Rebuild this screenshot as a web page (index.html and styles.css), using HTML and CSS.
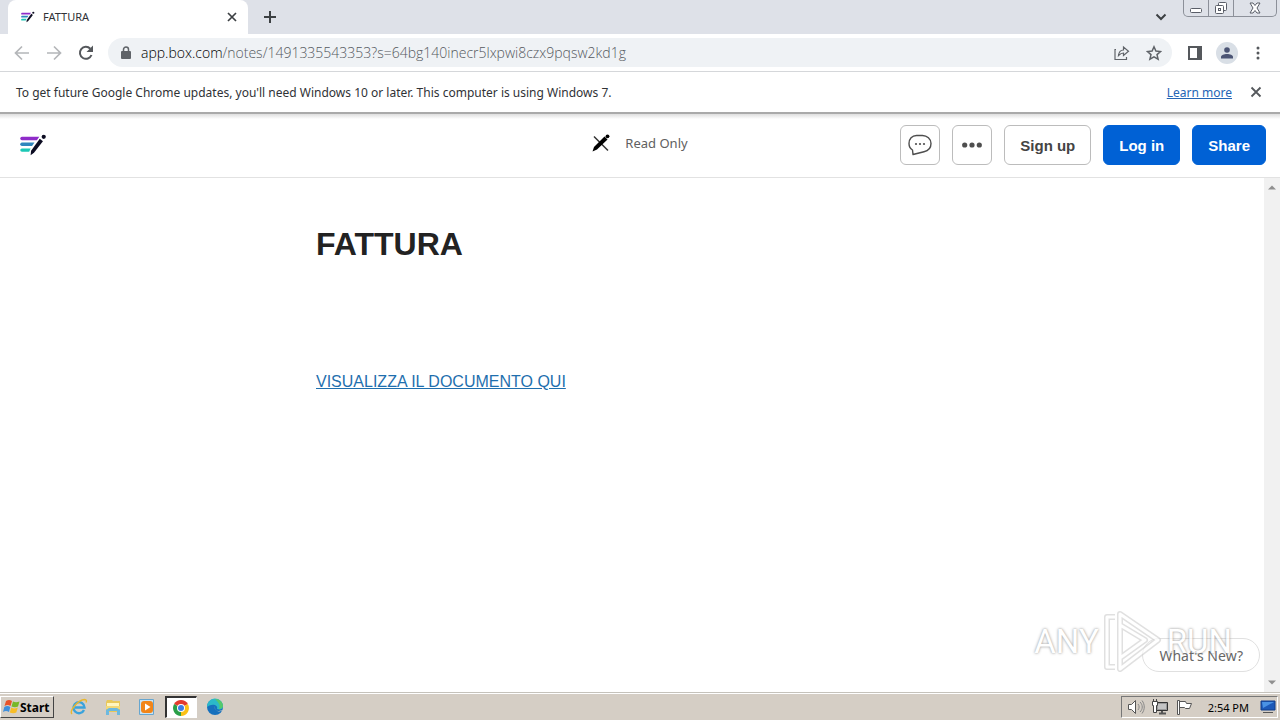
FILE: index.html
```html
<!DOCTYPE html>
<html lang="en">
<head>
<meta charset="utf-8">
<meta name="viewport" content="width=device-width, initial-scale=1">
<title>FATTURA</title>
<link rel="stylesheet" href="styles.css">
</head>
<body>
<svg class="defs" width="0" height="0" aria-hidden="true">
  <symbol id="notes" viewBox="0 0 28 24">
    <path d="M2 3.500h18l-2.500 3.500H2a1.750 1.750 0 0 1 0-3.500z" fill="#8f2cc9"/>
    <path d="M2 9.500h13l-2.500 3.500H2a1.750 1.750 0 0 1 0-3.500z" fill="#2f86bd"/>
    <path d="M2 15.500h9L9.500 19H2a1.750 1.750 0 0 1 0-3.500z" fill="#1cc8b5"/>
    <path d="M20.500 5.500l3.300 2.500L14.500 20 11 22.500l.5-4.500z" fill="#0c0c22"/>
    <circle cx="24.600" cy="3.500" r="2.200" fill="#0c0c22"/>
  </symbol>
</svg>

<header class="tabstrip">
  <div class="tab">
    <svg class="favicon" viewBox="0 0 28 24"><use href="#notes"/></svg>
    <span class="tab-title">FATTURA</span>
    <button class="plain" aria-label="Close tab"><svg width="10" height="10" viewBox="0 0 10 10"><path d="M1 1l8 8M9 1L1 9" stroke="#3c4043" stroke-width="1.700"/></svg></button>
  </div>
  <button class="plain newtab" aria-label="New tab"><svg width="12" height="12" viewBox="0 0 12 12"><path d="M6 0v12M0 6h12" stroke="#3c4043" stroke-width="2"/></svg></button>
  <button class="plain tabsearch" aria-label="Search tabs"><svg width="12" height="8" viewBox="0 0 12 8"><path d="M1.500 1.500L6 6l4.500-4.500" fill="none" stroke="#3c4043" stroke-width="2"/></svg></button>
  <div class="window-controls">
    <button class="wc" aria-label="Minimize"><svg width="12" height="14" viewBox="0 0 12 14"><rect x=".5" y="7.500" width="11" height="4" rx="1" fill="#fff" stroke="#5a5e68"/></svg></button>
    <button class="wc" aria-label="Restore"><svg width="14" height="14" viewBox="0 0 14 14"><g fill="#fff" stroke="#5a5e68"><rect x="4.500" y="1.500" width="8" height="8" rx="1"/><rect x="1.500" y="4.500" width="8" height="8" rx="1"/><rect x="4.500" y="7.500" width="2" height="2"/></g></svg></button>
    <button class="wc wc-close" aria-label="Close"><svg width="12" height="12" viewBox="0 0 12 12"><path d="M1 1h3l2 2.500L8 1h3L8 6l3 5H8L6 8.500 4 11H1l3-5z" fill="#fff" stroke="#5a5e68"/></svg></button>
  </div>
</header>

<nav class="toolbar" aria-label="Browser">
  <button class="plain nav" aria-label="Back"><svg width="16" height="16" viewBox="0 0 16 16"><path d="M15 8H2M8 1.500L1.500 8 8 14.500" fill="none" stroke="#b4b6b9" stroke-width="1.700"/></svg></button>
  <button class="plain nav" aria-label="Forward"><svg width="16" height="16" viewBox="0 0 16 16"><path d="M1 8h13M8 1.500L14.500 8 8 14.500" fill="none" stroke="#b4b6b9" stroke-width="1.700"/></svg></button>
  <button class="plain nav" aria-label="Reload"><svg width="16" height="16" viewBox="0 0 16 16"><path d="M13.500 10A6 6 0 1 1 12.300 3.700" fill="none" stroke="#55585c" stroke-width="2"/><path d="M15 .5V7H8.500z" fill="#55585c"/></svg></button>
  <div class="omnibox">
    <svg width="10" height="14" viewBox="0 0 10 14"><rect x="0" y="5" width="10" height="8" rx="1" fill="#5f6368"/><path d="M2.500 5.500V3.500a2.500 2.500 0 0 1 5 0v2" fill="none" stroke="#5f6368" stroke-width="1.500"/></svg>
    <a class="url" href="#"><span class="host">app.box.com</span>/notes/1491335543353?s=64bg140inecr5lxpwi8czx9pqsw2kd1g</a>
    <button class="plain" aria-label="Share this page"><svg width="16" height="16" viewBox="0 0 16 16"><path d="M2 4.500H1v10h11.500V12M4.500 10.500c.4-3.500 2-5.500 5-5.500V2l5 4.200-5 4.300V8C7.500 8 6 9 4.500 10.500z" fill="none" stroke="#5f6368" stroke-width="1.200"/></svg></button>
    <button class="plain star" aria-label="Bookmark"><svg width="16" height="16" viewBox="0 0 16 16"><path d="M8 1.800l1.900 4.300 4.600.4-3.500 3.100 1.100 4.600L8 11.800l-4.100 2.400L5 9.600 1.500 6.500l4.600-.4z" fill="none" stroke="#5f6368" stroke-width="1.500"/></svg></button>
  </div>
  <button class="plain" aria-label="Side panel"><svg width="14" height="14" viewBox="0 0 14 14"><path d="M1 1h12v12H1z" fill="none" stroke="#55585c" stroke-width="2"/><path d="M9 1h4v12H9z" fill="#55585c"/></svg></button>
  <button class="plain avatar" aria-label="Profile"><svg width="12" height="12" viewBox="0 0 12 12" fill="#4b5474"><circle cx="6" cy="3" r="2.800"/><path d="M0 11.500V10c0-2 3-3 6-3s6 1 6 3v1.500z"/></svg></button>
  <button class="plain kebab" aria-label="Menu"><svg width="4" height="14" viewBox="0 0 4 14" fill="#55585c"><circle cx="2" cy="2" r="1.500"/><circle cx="2" cy="7" r="1.500"/><circle cx="2" cy="12" r="1.500"/></svg></button>
</nav>

<aside class="infobar">
  <span class="info-text">To get future Google Chrome updates, you'll need Windows 10 or later. This computer is using Windows 7.</span>
  <a class="learn" href="#">Learn more</a>
  <button class="plain" aria-label="Dismiss"><svg width="12" height="12" viewBox="0 0 12 12"><path d="M1.500 1.500l9 9M10.500 1.500l-9 9" stroke="#55585c" stroke-width="1.800"/></svg></button>
</aside>

<div class="appbar">
  <svg class="logo" viewBox="0 0 28 24"><use href="#notes"/></svg>
  <div class="mode">
    <svg width="18" height="18" viewBox="0 0 18 18"><path d="M2 2.500L16 16.500" stroke="#333" stroke-width="1.500"/><path d="M12.500 2.500l3 3L5 15.500.5 17.500 2 13z" fill="#000"/><circle cx="15.500" cy="2.300" r="1.900" fill="#000"/></svg>
    <span>Read Only</span>
  </div>
  <div class="actions">
    <button class="btn icon-btn" aria-label="Comments"><svg width="24" height="22" viewBox="0 0 24 22"><path d="M5 20.500L4.500 16C2 14.500 1 12 1 9.500 1 5 4 1.500 8.500 1.500h6C19 1.500 23 5 23 9.500c0 5-3.500 7.500-7 8.200z" fill="none" stroke="#4e4e4e" stroke-width="1.400" stroke-linejoin="round"/><g fill="#4e4e4e"><circle cx="8" cy="10" r="1.100"/><circle cx="12" cy="10" r="1.100"/><circle cx="16" cy="10" r="1.100"/></g></svg></button>
    <button class="btn icon-btn" aria-label="More options"><svg width="20" height="6" viewBox="0 0 20 6" fill="#4e4e4e"><circle cx="2.700" cy="3" r="2.600"/><circle cx="10" cy="3" r="2.600"/><circle cx="17.300" cy="3" r="2.600"/></svg></button>
    <button class="btn">Sign up</button>
    <button class="btn primary">Log in</button>
    <button class="btn primary">Share</button>
  </div>
</div>

<main class="viewport">
  <article class="note">
    <h1>FATTURA</h1>
    <a class="doc-link" href="#">VISUALIZZA IL DOCUMENTO QUI</a>
  </article>
  <div class="scrollbar" aria-hidden="true">
    <svg width="8" height="5" viewBox="0 0 8 5"><path d="M0 4.500L4 .5l4 4z" fill="#8f8f8f"/></svg>
    <svg width="8" height="5" viewBox="0 0 8 5"><path d="M0 .5h8l-4 4z" fill="#8f8f8f"/></svg>
  </div>
  <button class="whats-new">What's New?</button>
  <div class="watermark">
    <span>ANY</span>
    <svg width="60" height="64" viewBox="0 0 60 64" fill="none" stroke-linejoin="round"><g stroke="#d4d4d4" stroke-width="6"><path d="M17 15V4l38 26-38 29V48M17 15v33l25-18z"/><path d="M12 7H4v50h8"/></g><g stroke="#fff" stroke-width="3"><path d="M17 15V4l38 26-38 29V48M17 15v33l25-18z"/><path d="M12 7H4v50h8"/></g></svg>
    <span>RUN</span>
  </div>
</main>

<footer class="taskbar">
  <button class="start"><svg width="17" height="16" viewBox="0 0 17 16"><path d="M3 2c2-1.500 4-1.500 6 0L7.500 7C5.500 5.800 4 5.800 1.500 7z" fill="#e8532a"/><path d="M10 2.500c2 1 4 1 6.500 0L15 7.500c-2 1-4 1-6.500 0z" fill="#77b82a"/><path d="M1.300 8c2-1.200 4-1.200 6 0L6 13c-2-1.200-4-1.200-6 0z" fill="#3f8fdc"/><path d="M8.300 8.500c2 1.200 4 1.200 6.500 0l-1.500 5c-2 1-4 1-6.500 0z" fill="#f8bd26"/></svg>Start</button>
  <div class="tasks">
    <button class="task" aria-label="Internet Explorer"><svg width="18" height="18" viewBox="0 0 18 18"><path d="M14 12A5.500 5.500 0 1 1 14.500 9.500H5" fill="none" stroke="#3aa3dc" stroke-width="2.400"/><path d="M2 16C-1 13 8 2 14.500 1.500c2.500 0 2 2 1.500 3" fill="none" stroke="#e9b72e" stroke-width="1.400"/></svg></button>
    <button class="task" aria-label="File Explorer"><svg width="18" height="18" viewBox="0 0 18 18"><path d="M2 4l1-2h5l1 1h7v11H2z" fill="#e9c85a"/><path d="M3 5h12v5H3z" fill="#fff5bf"/><path d="M2 8h14v3H2z" fill="#f2d878"/><path d="M2 17v-5l3-2h8l3 2v5h-3v-4H5v4z" fill="#6db9df"/></svg></button>
    <button class="task" aria-label="Media Player"><svg width="18" height="18" viewBox="0 0 18 18"><path d="M1.500 1.500h14v15h-14z" fill="#c9e4f5" stroke="#67a6cf"/><rect x="3" y="3" width="12" height="12" rx="3" fill="#f28518"/><path d="M7 5.500L12.500 9 7 12.500z" fill="#fff"/></svg></button>
    <button class="task active" aria-label="Chrome"><svg width="16" height="16" viewBox="0 0 16 16"><path d="M8 8L1.100 4A8 8 0 0 1 14.900 4z" fill="#e33b2e"/><path d="M8 8l6.900-4A8 8 0 0 1 8 16z" fill="#fbc116"/><path d="M8 8v8A8 8 0 0 1 1.100 4z" fill="#2a9f48"/><circle cx="8" cy="8" r="4" fill="#fff"/><circle cx="8" cy="8" r="3" fill="#3c7de6"/></svg></button>
    <button class="task" aria-label="Edge"><svg width="18" height="18" viewBox="0 0 18 18"><circle cx="9" cy="9" r="8" fill="#1670bd"/><path d="M1 9a8 8 0 0 1 16-1c0 3-3 4-6 3 1.500-4-5-6-10-2z" fill="#2bb9c9"/><path d="M9 1c5 0 8 3.500 8 7 0 2-2 3-4 3 2-4-1-7-4-10z" fill="#55c96c"/><path d="M9 8c-1 3 1 5 4 5l4-1c-4 3-9 1-8-4z" fill="#d8d3c9"/></svg></button>
  </div>
  <div class="tray">
    <svg width="18" height="18" viewBox="0 0 18 18" fill="#fff" stroke="#555"><path d="M1.500 6.500h3l4-4v13l-4-4h-3z"/><path d="M11 6c1.500 2 1.500 4 0 6M13 4c3 3 3 7 0 10M15 2.500c3 4 3 9 0 13" fill="none" stroke="#888"/></svg>
    <svg width="18" height="18" viewBox="0 0 18 18"><path d="M5.500 4.500h11v8h-11z" fill="#999" stroke="#333"/><path d="M7 6h8v5H7z" fill="#c4c4c4"/><path d="M8 15.500h7M11 13v2" stroke="#555" stroke-width="2"/><path d="M1.500 3.500h5v4h-1v7h-3v-7h-1zM2.500 1v2M5.500 1v2" fill="#fff" stroke="#444"/></svg>
    <svg width="18" height="18" viewBox="0 0 18 18" fill="#fff" stroke="#555"><path d="M2.500 2.500h2v14h-2zM4.500 3.500h6l1 2h5l-2 5h-4l-1-1h-5z"/></svg>
    <time>2:54 PM</time>
    <svg width="16" height="16" viewBox="0 0 16 16"><path d="M1 2h14v9H1z" fill="#1c59b8" stroke="#123f88"/><path d="M2 3h12L3 9z" fill="#4a93e4"/><path d="M3 13h10v1H3z" fill="#555"/></svg>
  </div>
</footer>
</body>
</html>
```

FILE: styles.css
```css
* { box-sizing: border-box; }

body {
  margin: 0;
  min-height: 100vh;
  display: flex;
  flex-direction: column;
  background: #fff;
  color: #303236;
  font-family: "Noto Sans", "Open Sans", sans-serif;
  font-size: 12px;
}

button { font: inherit; color: inherit; }
svg { display: block; flex: none; }
.defs { position: absolute; }

.plain {
  display: flex;
  align-items: center;
  justify-content: center;
  padding: 0;
  border: 0;
  background: none;
}

.tabstrip {
  display: flex;
  align-items: center;
  height: 34px;
  padding: 0 0 0 8px;
  background: #dee1e8;
}
.tab {
  display: flex;
  align-items: center;
  gap: 8px;
  width: 240px;
  height: 34px;
  padding: 0 11px 0 13px;
  background: #fff;
  border-radius: 8px 8px 0 0;
}
.favicon { width: 14px; height: 12px; }
.tab-title { flex: 1; padding-bottom: 2px; font-size: 11px; }
.newtab { width: 44px; height: 34px; }
.tabsearch { width: 44px; height: 34px; margin-left: auto; }
.window-controls {
  display: flex;
  align-self: flex-start;
  height: 17px;
  margin-right: 3px;
  border: 1px solid #8c9099;
  border-top: 0;
  border-radius: 0 0 5px 5px;
}
.wc {
  display: flex;
  align-items: center;
  justify-content: center;
  width: 25px;
  padding: 0;
  border: 0;
  border-right: 1px solid #8c9099;
  background: none;
}
.wc-close { width: 42px; border-right: 0; }

.toolbar {
  display: flex;
  align-items: center;
  gap: 16px;
  height: 38px;
  padding: 0 20px 0 14px;
  border-bottom: 1px solid #d5d7da;
}
.nav { width: 16px; }
.omnibox {
  flex: 1;
  display: flex;
  align-items: center;
  gap: 10px;
  height: 29px;
  margin-left: -2px;
  padding: 0 10px 0 13px;
  border-radius: 15px;
  background: #eff2f5;
}
.url {
  flex: 1;
  color: #55595e;
  font-family: "Open Sans", "Noto Sans", sans-serif;
  font-size: 14px;
  font-weight: 300;
  text-decoration: none;
  white-space: nowrap;
}
.host { color: #000; }
.star { margin-left: 6px; }
.avatar {
  width: 22px;
  height: 22px;
  margin-left: -2px;
  border-radius: 50%;
  background: #d9dfe6;
}
.kebab { width: 4px; margin-left: 2px; }

.infobar {
  display: flex;
  align-items: center;
  gap: 18px;
  height: 40px;
  padding: 0 18px 0 16px;
}
.info-text { flex: 1; }
.learn { color: #2565b5; }

.appbar {
  display: grid;
  grid-template-columns: 1fr auto 1fr;
  align-items: center;
  height: 66px;
  padding: 0 14px 1px 20px;
  border-top: 2px solid #aaa;
  border-bottom: 1px solid #e2e2e2;
  background: linear-gradient(#dedede, #fff 5px);
}
.logo { width: 27px; height: 24px; }
.mode {
  display: flex;
  align-items: center;
  gap: 15px;
  padding: 0 6px 5px 0;
  color: #606060;
  font-size: 13px;
}
.actions { display: flex; justify-content: flex-end; gap: 12px; }
.btn {
  display: flex;
  align-items: center;
  justify-content: center;
  height: 40px;
  padding: 0 15px;
  border: 1px solid #bcbcbc;
  border-radius: 6px;
  background: #fff;
  color: #444;
  font-family: "Liberation Sans", Arial, sans-serif;
  font-size: 15px;
  font-weight: 700;
}
.icon-btn { width: 40px; padding: 0; }
.primary { border-color: #0061d5; background: #0061d5; color: #fff; }

.viewport { position: relative; flex: 1; display: flex; }
.note {
  flex: 1;
  padding: 46px 316px 0;
  font-family: "Liberation Sans", Arial, sans-serif;
}
h1 {
  margin: 0 0 108px;
  color: #222;
  font-size: 32px;
  line-height: 40px;
}
.doc-link { color: #1f6fae; font-size: 16px; line-height: 20px; white-space: nowrap; }
.scrollbar {
  display: flex;
  flex-direction: column;
  align-items: center;
  justify-content: space-between;
  width: 16px;
  padding: 7px 0;
  background: #f1f1f1;
}
.whats-new {
  position: absolute;
  right: 20px;
  bottom: 20px;
  height: 34px;
  padding: 0 16px;
  border: 1px solid #e0e0e0;
  border-radius: 17px;
  background: #fff;
  color: #666;
  font-size: 14px;
}
.watermark {
  position: absolute;
  right: 48px;
  bottom: 18px;
  display: flex;
  align-items: center;
  gap: 4px;
  opacity: 0.7;
  pointer-events: none;
  color: #fff;
  font-family: Roboto, sans-serif;
  font-size: 33px;
  line-height: 60px;
  text-shadow: 0 0 3px #888, 0 0 2px #aaa;
}

.taskbar {
  display: flex;
  align-items: center;
  height: 28px;
  padding: 1px 2px 0 0;
  border-top: 1px solid #c5c2bb;
  background: #d5cec5;
  box-shadow: inset 0 1px #fff;
  color: #000;
}
.start {
  display: flex;
  align-items: center;
  height: 22px;
  padding: 0 3px 0 2px;
  border: 1px solid;
  border-color: #fff #444 #444 #fff;
  background: #d5cec5;
  font-size: 12px;
  font-weight: 700;
}
.tasks { display: flex; gap: 2px; margin-left: 9px; }
.task {
  display: flex;
  align-items: center;
  justify-content: center;
  width: 32px;
  height: 22px;
  padding: 0;
  border: 1px solid transparent;
  background: none;
}
.active { background: #fff; border-color: #333 #fff #fff #333; border-width: 2px 1px 1px 2px; }
.tray {
  display: flex;
  align-items: center;
  gap: 6px;
  height: 22px;
  margin-left: auto;
  padding: 0 1px 0 5px;
  border: 1px solid;
  border-color: #777 #fff #fff #777;
  font-size: 11px;
}
.tray time { margin: 0 5px 0 9px; }
```
